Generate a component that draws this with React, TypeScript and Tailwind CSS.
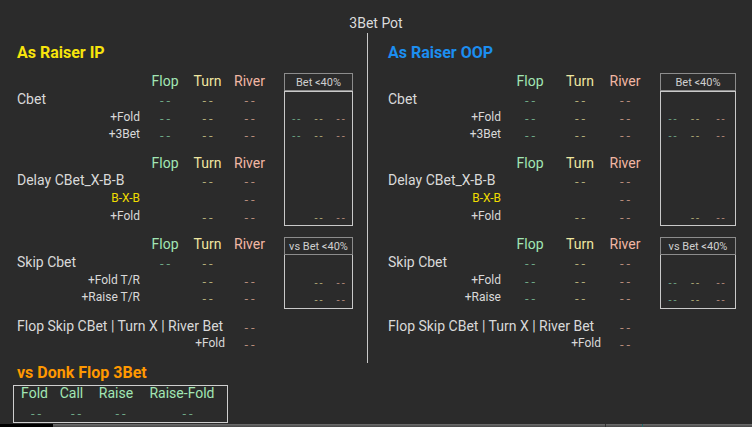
type Cols = {
  label: string
  f: string
  t: string
  r: string
  wide: string
  pr: string
  sub: string[]
  box: string
}

type RowDef = {
  label: string
  kind: "main" | "sub" | "gold"
  v: number[]
  wide?: boolean
}

const IP: Cols = {
  label: "w-[128px]",
  f: "w-[40px]",
  t: "w-[45px]",
  r: "w-[39px]",
  wide: "w-[213px]",
  pr: "pr-[5px]",
  sub: ["w-[23px]", "w-[22px]", "w-[23px]"],
  box: "w-[69px]",
}

const OOP: Cols = {
  label: "w-[117px]",
  f: "w-[50px]",
  t: "w-[50px]",
  r: "w-[40px]",
  wide: "w-[217px]",
  pr: "pr-[4px]",
  sub: ["w-[23px]", "w-[22px]", "w-[29px]"],
  box: "w-[76px]",
}

const dashColor = ["text-[#6fa886]", "text-[#b3ad78]", "text-[#b88c7c]"]

function Dash({ c }: { c: number }) {
  return <span className={`pl-[3px] text-[13px] tracking-[3px] ${dashColor[c]}`}>--</span>
}

function Head({ cols }: { cols: Cols }) {
  return (
    <div className="flex h-[17.7px] text-[14px] leading-[17.7px]">
      <div className={cols.label} />
      <div className={`${cols.f} text-center text-[#a2e6b4]`}>Flop</div>
      <div className={`${cols.t} text-center text-[#efe6a0]`}>Turn</div>
      <div className={`${cols.r} text-center text-[#f2b7a4]`}>River</div>
    </div>
  )
}

function Row({ row, cols }: { row: RowDef; cols: Cols }) {
  const labelCls =
    row.kind === "main"
      ? "text-left text-[14px] text-[#d9d9d9]"
      : `text-right text-[12px] ${cols.pr} ${row.kind === "gold" ? "text-[#efdc00]" : "text-[#d9d9d9]"}`
  return (
    <div className="flex h-[17.7px] leading-[17.7px]">
      <div className={`${row.wide ? cols.wide : cols.label} whitespace-nowrap ${labelCls}`}>{row.label}</div>
      {!row.wide && <div className={`${cols.f} text-center`}>{row.v[0] ? <Dash c={0} /> : null}</div>}
      {!row.wide && <div className={`${cols.t} text-center`}>{row.v[1] ? <Dash c={1} /> : null}</div>}
      <div className={`${cols.r} text-center`}>{row.v[2] ? <Dash c={2} /> : null}</div>
    </div>
  )
}

function BoxHead({ text, cols }: { text: string; cols: Cols }) {
  return (
    <div className={`${cols.box} h-[17.7px] border border-[#8c8c8c] flex items-center justify-center text-[11px] leading-none text-[#cfcfcf]`}>
      {text}
    </div>
  )
}

function BoxRow({ cols, v }: { cols: Cols; v: number[] }) {
  return (
    <div className="flex h-[17.7px] leading-[17.7px]">
      {v.map((on, i) => (
        <div key={i} className={`${cols.sub[i]} text-center`}>
          {on ? <span className={`pl-[2px] text-[11px] tracking-[2px] ${dashColor[i]}`}>--</span> : null}
        </div>
      ))}
    </div>
  )
}

function Panel({
  title,
  titleColor,
  cols,
  sections,
  box1,
  box2,
}: {
  title: string
  titleColor: string
  cols: Cols
  sections: RowDef[][]
  box1: number[][]
  box2: number[][]
}) {
  const gaps = ["", "mt-[10.7px]", "mt-[10.9px]", "mt-[10.5px]"]
  return (
    <div className="flex flex-col pt-[9.6px]">
      <div className={`h-[20px] text-[16px] leading-[20px] font-bold ${titleColor}`}>{title}</div>
      <div className="mt-[10.6px] flex items-start">
        <div className="flex flex-col">
          {sections.map((rows, si) => (
            <div key={si} className={gaps[si]}>
              {si < 3 && <Head cols={cols} />}
              {rows.map((r, ri) => (
                <Row key={ri} row={r} cols={cols} />
              ))}
            </div>
          ))}
        </div>

        {/* boxes */}
        <div className="ml-[15px] flex flex-col">
          <BoxHead text="Bet <40%" cols={cols} />
          <div className={`${cols.box} border border-[#c9c9c9]`}>
            <div className="h-[16.7px]" />
            <BoxRow cols={cols} v={box1[0]} />
            <BoxRow cols={cols} v={box1[1]} />
            <div className="h-[63.8px]" />
            <BoxRow cols={cols} v={box1[2]} />
          </div>
          <div className="mt-[10.9px]">
            <BoxHead text="vs Bet <40%" cols={cols} />
          </div>
          <div className={`${cols.box} border border-t-0 border-[#c9c9c9]`}>
            <div className="h-[17.7px]" />
            <BoxRow cols={cols} v={box2[0]} />
            <BoxRow cols={cols} v={box2[1]} />
          </div>
        </div>
      </div>
    </div>
  )
}

const ipSections: RowDef[][] = [
  [
    { label: "Cbet", kind: "main", v: [1, 1, 1] },
    { label: "+Fold", kind: "sub", v: [1, 1, 1] },
    { label: "+3Bet", kind: "sub", v: [1, 1, 1] },
  ],
  [
    { label: "Delay CBet_X-B-B", kind: "main", v: [0, 1, 1] },
    { label: "B-X-B", kind: "gold", v: [0, 0, 1] },
    { label: "+Fold", kind: "sub", v: [0, 1, 1] },
  ],
  [
    { label: "Skip Cbet", kind: "main", v: [1, 1, 0] },
    { label: "+Fold T/R", kind: "sub", v: [0, 1, 1] },
    { label: "+Raise T/R", kind: "sub", v: [0, 1, 1] },
  ],
  [
    { label: "Flop Skip CBet | Turn X | River Bet", kind: "main", v: [0, 0, 1], wide: true },
    { label: "+Fold", kind: "sub", v: [0, 0, 1], wide: true },
  ],
]

const oopSections: RowDef[][] = [
  ipSections[0],
  ipSections[1],
  [
    { label: "Skip Cbet", kind: "main", v: [1, 1, 1] },
    { label: "+Fold", kind: "sub", v: [1, 1, 1] },
    { label: "+Raise", kind: "sub", v: [1, 1, 1] },
  ],
  ipSections[3],
]

const donk = [
  { label: "Fold", w: "w-[41px]", dash: "pl-[3px]" },
  { label: "Call", w: "w-[33px]", dash: "pl-[9px]" },
  { label: "Raise", w: "w-[56px]", dash: "pl-[9px]" },
  { label: "Raise-Fold", w: "w-[76px]", dash: "pl-[11px]" },
]

export default function App() {
  return (
    <div className="w-[752px] h-[427px] bg-[#2b2b2b] flex flex-col overflow-hidden font-['Roboto',sans-serif] text-[#d9d9d9]">
      <div className="h-[33px] pt-[14.5px] text-center text-[14px] leading-[17px] text-[#dcdcdc]">3Bet Pot</div>

      <div className="flex h-[391px] items-start">
        {/* As Raiser IP */}
        <div className="w-[367px] pl-[17px]">
          <Panel
            title="As Raiser IP"
            titleColor="text-[#f7e40c]"
            cols={IP}
            sections={ipSections}
            box1={[[1, 1, 1], [1, 1, 1], [0, 1, 1]]}
            box2={[[0, 1, 1], [0, 1, 1]]}
          />

          <div className="mt-[10px] h-[20px] text-[16px] leading-[20px] font-bold text-[#ff9800]">vs Donk Flop 3Bet</div>
          <div className="-ml-[4px] mt-[2px] w-[215px] border border-[#cfcfcf] flex">
            {donk.map((d) => (
              <div key={d.label} className={`${d.w} flex flex-col items-center`}>
                <div className="h-[14px] text-[14px] leading-[14px] whitespace-nowrap text-[#a2e6b4]">{d.label}</div>
                <div className={`mt-[4px] h-[17.7px] leading-[17.7px] ${d.dash}`}>
                  <Dash c={0} />
                </div>
              </div>
            ))}
          </div>
        </div>

        <div className="w-px h-[330px] bg-[#c9c9c9]" />

        {/* As Raiser OOP */}
        <div className="flex-1 pl-[20px]">
          <Panel
            title="As Raiser OOP"
            titleColor="text-[#1c8ef0]"
            cols={OOP}
            sections={oopSections}
            box1={[[1, 1, 1], [1, 1, 1], [0, 1, 1]]}
            box2={[[1, 1, 1], [1, 1, 1]]}
          />
        </div>
      </div>

      {/* bottom strip */}
      <div className="flex h-[3px]">
        <div className="w-[53px] bg-black" />
        <div className="w-[552px] bg-gradient-to-b from-[#707070] to-[#474747]" />
        <div className="w-px bg-[#333333]" />
        <div className="w-[36px] bg-gradient-to-b from-[#707070] to-[#474747]" />
        <div className="w-px bg-[#1f6b6e]" />
        <div className="flex-1 bg-gradient-to-b from-[#707070] to-[#474747]" />
      </div>
    </div>
  )
}
